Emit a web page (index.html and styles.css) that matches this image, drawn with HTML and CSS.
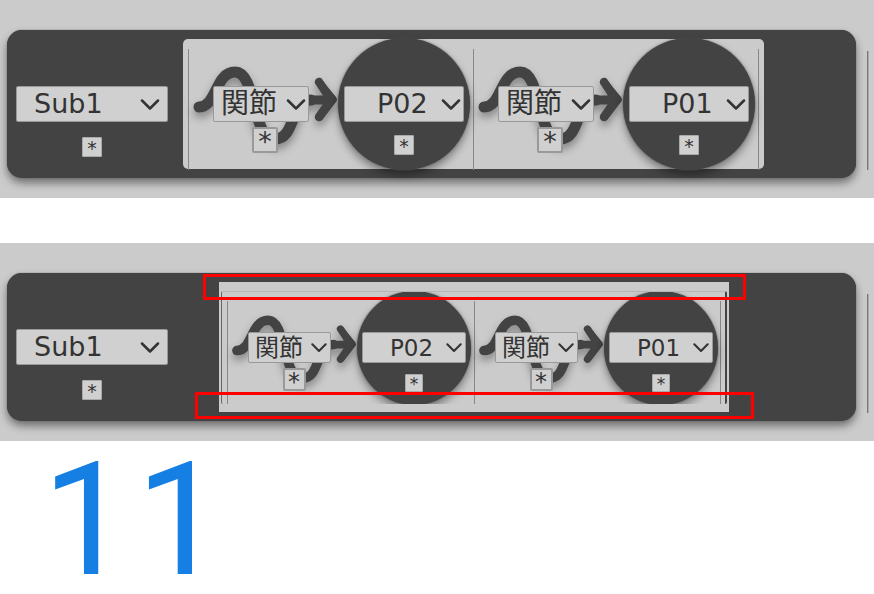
FILE: index.html
```html
<!DOCTYPE html>
<html lang="ja">
<head>
<meta charset="utf-8">
<title>Sub1</title>
<link rel="stylesheet" href="styles.css">
</head>
<body>
<svg class="symbols" aria-hidden="true">
  <symbol id="chevron" viewBox="0 0 20 12"><path d="M2 1.5 10 9.5 18 1.5" fill="none" stroke="#333" stroke-width="2.5" stroke-linecap="round" stroke-linejoin="round"/></symbol>
  <symbol id="wave" viewBox="0 0 150 132">
    <g fill="none" stroke="#434343" stroke-linecap="round" stroke-linejoin="round">
      <path stroke-width="11" d="M10 69C28 69 26 34 46 34C68 34 62 101 86 101C107 101 101 62 122 62"/>
      <path stroke-width="9" d="M120 62H140"/>
      <path stroke-width="8.5" d="M130 44 142 62 130 79"/>
    </g>
    <path fill="#434343" d="M133 42 147 59Q149 62 147 64L133 82 134 62Z"/>
  </symbol>
</svg>

<section class="panel">
  <div class="card">
    <div class="sub">
      <div class="pick"><select aria-label="Sub"><option>Sub1</option></select><svg><use href="#chevron"/></svg></div>
      <button type="button">*</button>
    </div>
    <div class="tray">
      <div class="step">
        <div class="link"><svg class="wave"><use href="#wave"/></svg>
          <div class="pick"><select aria-label="Link 1"><option>関節</option></select><svg><use href="#chevron"/></svg></div>
          <button type="button">*</button></div>
        <div class="node">
          <div class="pick"><select aria-label="Node 1"><option>P02</option></select><svg><use href="#chevron"/></svg></div>
          <button type="button">*</button></div>
      </div>
      <div class="step">
        <div class="link"><svg class="wave"><use href="#wave"/></svg>
          <div class="pick"><select aria-label="Link 2"><option>関節</option></select><svg><use href="#chevron"/></svg></div>
          <button type="button">*</button></div>
        <div class="node">
          <div class="pick"><select aria-label="Node 2"><option>P01</option></select><svg><use href="#chevron"/></svg></div>
          <button type="button">*</button></div>
      </div>
    </div>
  </div>
  <div class="divider"></div>
</section>

<section class="panel">
  <div class="card">
    <div class="sub">
      <div class="pick"><select aria-label="Sub"><option>Sub1</option></select><svg><use href="#chevron"/></svg></div>
      <button type="button">*</button>
    </div>
    <div class="frame">
      <div class="tray small">
        <div class="step">
          <div class="link"><svg class="wave"><use href="#wave"/></svg>
            <div class="pick"><select aria-label="Link 1"><option>関節</option></select><svg><use href="#chevron"/></svg></div>
            <button type="button">*</button></div>
          <div class="node">
            <div class="pick"><select aria-label="Node 1"><option>P02</option></select><svg><use href="#chevron"/></svg></div>
            <button type="button">*</button></div>
        </div>
        <div class="step">
          <div class="link"><svg class="wave"><use href="#wave"/></svg>
            <div class="pick"><select aria-label="Link 2"><option>関節</option></select><svg><use href="#chevron"/></svg></div>
            <button type="button">*</button></div>
          <div class="node">
            <div class="pick"><select aria-label="Node 2"><option>P01</option></select><svg><use href="#chevron"/></svg></div>
            <button type="button">*</button></div>
        </div>
      </div>
    </div>
  </div>
  <div class="divider"></div>
  <div class="mark mark-top"></div>
  <div class="mark mark-bottom"></div>
</section>

<p class="number"><span>1</span><span>1</span></p>
</body>
</html>
```
FILE: styles.css
```css
* {
  box-sizing: border-box;
}

body {
  margin: 0;
  background: #fff;
  color: #333;
  font-family: "DejaVu Sans", "Noto Sans CJK JP", sans-serif;
}

.symbols {
  position: absolute;
  width: 0;
  height: 0;
}

.panel {
  position: relative;
  display: flex;
  padding: 30px 5px 20px 7px;
  margin-bottom: 45px;
  background: #cbcbcb;
}

.panel + .panel {
  margin-bottom: 0;
}

.card {
  flex: 1;
  display: flex;
  align-items: center;
  height: 148px;
  border-radius: 15px;
  background: #434343;
  box-shadow: 0 0 1px #434343, 0 5px 8px rgba(0, 0, 0, 0.45);
}

.divider {
  width: 2px;
  height: 119px;
  margin: 21px 0 0 11px;
  border-left: 1px solid #777;
  border-right: 1px solid #aaa;
}

.sub {
  align-self: flex-start;
  display: flex;
  flex-direction: column;
  align-items: center;
  gap: 15px;
  width: 152px;
  margin: 56px 15px 0 9px;
}

.pick {
  position: relative;
  width: 100%;
  height: 36px;
}

.pick svg {
  position: absolute;
  right: 8px;
  top: 13px;
  width: 20px;
  height: 12px;
  pointer-events: none;
}

select {
  appearance: none;
  display: block;
  width: 100%;
  height: 100%;
  padding: 0 0 0 17px;
  border: 1px solid #999;
  border-radius: 2px;
  background: #d0d0d0;
  color: #333;
  font-family: inherit;
  font-size: 27px;
  line-height: 32px;
}

button {
  position: relative;
  width: 20px;
  height: 20px;
  padding: 2px 0 0;
  border: 1px solid #aaa;
  border-radius: 1px;
  background: #d0d0d0;
  color: #333;
  font-family: inherit;
  font-size: 19px;
  line-height: 16px;
}

.tray {
  display: flex;
  height: 130px;
  padding: 0 5px;
  border-radius: 5px;
  background: #cbcbcb;
  --step: 285px;
  --link: 150px;
  --node: 132px;
  --line-top: 11px;
}

.step {
  display: flex;
  width: var(--step);
  height: var(--node);
  margin-top: -1px;
  background: linear-gradient(#888, #888) 0 var(--line-top) / 1px 100% no-repeat;
}

.step:last-child {
  width: calc(var(--step) + 1px);
  background:
    linear-gradient(#888, #888) 0 var(--line-top) / 1px 100% no-repeat,
    linear-gradient(#888, #888) 100% var(--line-top) / 1px 100% no-repeat;
}

.link,
.node {
  position: relative;
  display: flex;
  flex-direction: column;
  align-items: center;
  height: var(--node);
  padding-top: 48px;
}

.link {
  gap: 5px;
  width: var(--link);
  padding-left: 4px;
}

.node {
  gap: 13px;
  width: var(--node);
  border-radius: 50%;
  background: #434343;
  box-shadow: 0 0 2px #555, 0 5px 8px rgba(0, 0, 0, 0.4);
}

.wave {
  position: absolute;
  left: 1px;
  top: 0;
  width: var(--link);
  height: var(--node);
  filter: drop-shadow(0 5px 4px rgba(0, 0, 0, 0.35));
}

.link .pick {
  align-self: flex-start;
  width: 96px;
  margin-left: 21px;
}

.link select {
  padding-left: 7px;
  font-size: 28px;
}

.link .pick svg,
.node .pick svg {
  right: 3px;
}

.link button {
  width: 26px;
  height: 26px;
  padding-top: 3px;
  border: 2px solid #999;
  border-radius: 2px;
  font-size: 27px;
  line-height: 20px;
}

.node .pick {
  width: 120px;
}

.node select {
  padding-left: 32px;
}

.frame {
  margin-left: 36px;
  padding: 9px 2px 8px;
  background: #cbcbcb;
}

.small {
  height: 113px;
  padding: 0 4px 0 5px;
  overflow: hidden;
  border-left: 1px solid #666;
  border-right: 2px solid #434343;
  border-top: 1px solid #b5b5b5;
  border-radius: 2px;
  --step: 247px;
  --link: 130px;
  --node: 114px;
  --line-top: 10px;
}

.small .step:last-child {
  width: var(--step);
}

.small .link,
.small .node {
  padding-top: 41px;
}

.small .pick {
  height: 31px;
}

.small .link .pick {
  width: 83px;
  margin-left: 17px;
}

.small .node .pick {
  width: 104px;
}

.small .pick svg {
  top: 11px;
  width: 18px;
  height: 10px;
}

.small select {
  font-size: 23px;
  line-height: 28px;
}

.small .link select {
  padding-left: 6px;
  font-size: 24px;
}

.small .node select {
  padding-left: 27px;
}

.small button {
  width: 18px;
  height: 18px;
  font-size: 17px;
  line-height: 14px;
}

.small .node {
  gap: 11px;
}

.small .link button {
  width: 23px;
  height: 23px;
  padding-top: 3px;
  font-size: 24px;
  line-height: 18px;
}

.mark {
  position: absolute;
  border: 3px solid #f00;
  pointer-events: none;
}

.mark-top {
  left: 203px;
  top: 31px;
  width: 543px;
  height: 26px;
}

.mark-bottom {
  left: 195px;
  top: 149px;
  width: 559px;
  height: 27px;
}

.number {
  display: flex;
  gap: 5px;
  margin: 0;
  padding: 6px 42px 0;
  color: #167fe3;
  font-family: Roboto, sans-serif;
  font-size: 158px;
  line-height: 147px;
}
```
